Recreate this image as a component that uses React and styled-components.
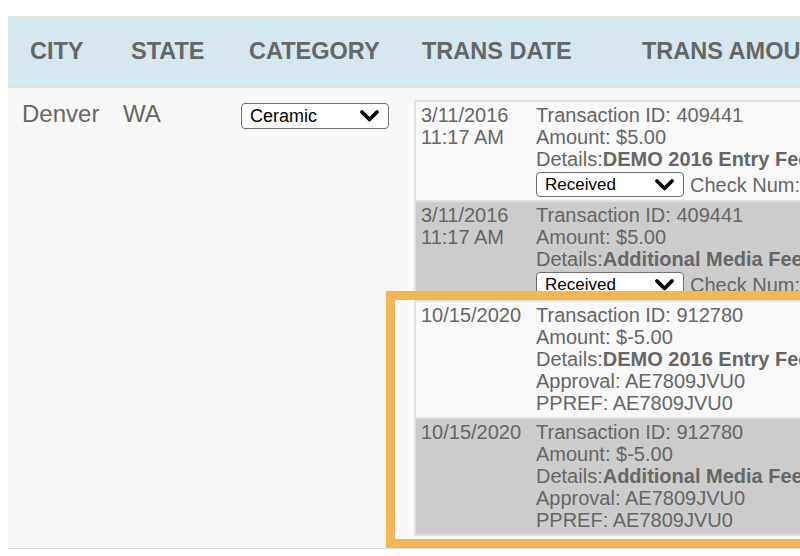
import styled, { createGlobalStyle } from "styled-components";

const Global = createGlobalStyle`
  html, body {
    margin: 0;
    background: #ffffff;
    overflow: hidden;
  }
  body {
    padding: 8px;
    font-family: "Liberation Sans", Arial, sans-serif;
  }
`;

const transactions = [
  {
    date: "3/11/2016",
    time: "11:17 AM",
    id: "409441",
    amount: "$5.00",
    details: "DEMO 2016 Entry Fee",
    status: "Received",
  },
  {
    date: "3/11/2016",
    time: "11:17 AM",
    id: "409441",
    amount: "$5.00",
    details: "Additional Media Fee",
    status: "Received",
  },
  {
    date: "10/15/2020",
    id: "912780",
    amount: "$-5.00",
    details: "DEMO 2016 Entry Fee",
    approval: "AE7809JVU0",
  },
  {
    date: "10/15/2020",
    id: "912780",
    amount: "$-5.00",
    details: "Additional Media Fee",
    approval: "AE7809JVU0",
  },
];

function Chevron() {
  return (
    <svg width="21" height="14" viewBox="0 0 21 14">
      <polyline
        points="3,3 10.5,10.5 18,3"
        fill="none"
        stroke="#000"
        strokeWidth="3.8"
        strokeLinecap="round"
        strokeLinejoin="round"
      />
    </svg>
  );
}

function Dropdown({ value, width, size }) {
  return (
    <SelectBox width={width} size={size}>
      <span>{value}</span>
      <Chevron />
    </SelectBox>
  );
}

export default function App() {
  return (
    <Page>
      <Global />
      <Table>
        <Head>
          <HeadCell>CITY</HeadCell>
          <HeadCell>STATE</HeadCell>
          <HeadCell>CATEGORY</HeadCell>
          <HeadCell>TRANS DATE</HeadCell>
          <HeadCell>TRANS AMOUNT</HeadCell>
        </Head>
        <BodyRow>
          <Cell>Denver</Cell>
          <Cell>WA</Cell>
          <Cell>
            <Dropdown value="Ceramic" width={148} size={18} />
          </Cell>
          <WideCell>
            <Ledger>
              {transactions.map((t, i) => (
                <LedgerRow key={i} shaded={i % 2 === 1}>
                  <DateCol>
                    <div>{t.date}</div>
                    {t.time && <div>{t.time}</div>}
                  </DateCol>
                  <Info>
                    <div>Transaction ID: {t.id}</div>
                    <div>Amount: {t.amount}</div>
                    <div>
                      Details:<b>{t.details}</b>
                    </div>
                    {t.status && (
                      <StatusLine>
                        <Dropdown value={t.status} width={148} size={17} />
                        <span>Check Num:</span>
                      </StatusLine>
                    )}
                    {t.approval && <div>Approval: {t.approval}</div>}
                    {t.approval && <div>PPREF: {t.approval}</div>}
                  </Info>
                </LedgerRow>
              ))}
            </Ledger>
          </WideCell>
        </BodyRow>
      </Table>
      <Highlight />
    </Page>
  );
}

const Page = styled.div`
  position: relative;
  width: 1200px;
  padding-top: 8px;
`;

const Table = styled.div`
  width: 1200px;
  display: grid;
  grid-template-columns: 101px 118px 173px 220px 1fr;
`;

const Head = styled.div`
  grid-column: 1 / -1;
  display: grid;
  grid-template-columns: subgrid;
  height: 69px;
  align-items: center;
  background: #d5e8ef;
  border-top: 1px solid #e4e2d8;
  border-bottom: 2px solid #e2e1d6;
`;

const HeadCell = styled.div`
  padding-left: 22px;
  font-size: 23.5px;
  font-weight: bold;
  color: #666666;
  white-space: nowrap;
`;

const BodyRow = styled.div`
  grid-column: 1 / -1;
  display: grid;
  grid-template-columns: subgrid;
  background: #f8f8f8;
  border-bottom: 1px solid #dddddd;
`;

const Cell = styled.div`
  padding: 12px 0 12px 14px;
  font-size: 24px;
  line-height: 27px;
  color: #666666;
`;

const WideCell = styled(Cell)`
  grid-column: 4 / -1;
`;

const Ledger = styled.div`
  border: 2px solid #e2e2dc;
  border-right: none;
  width: 900px;
`;

const LedgerRow = styled.div`
  display: grid;
  grid-template-columns: 120px 1fr;
  padding: 2px 0 3px;
  background: ${(p) => (p.shaded ? "#cccccc" : "#f9f9f9")};
  border-bottom: 2px solid #e2e2dc;
  font-size: 20px;
  line-height: 22px;
  color: #666666;
  white-space: nowrap;
  &:last-child {
    border-bottom: none;
  }
`;

const DateCol = styled.div`
  padding-left: 5px;
`;

const Info = styled.div`
  b {
    font-weight: bold;
  }
`;

const StatusLine = styled.div`
  display: flex;
  align-items: center;
  gap: 6px;
  margin-top: 2px;
`;

const SelectBox = styled.div`
  box-sizing: border-box;
  width: ${(p) => p.width}px;
  height: 26px;
  margin-top: 3px;
  display: flex;
  align-items: center;
  justify-content: space-between;
  padding: 0 8px 0 8px;
  background: #ffffff;
  border: 1px solid #6f6f6f;
  border-radius: 4px;
  font-size: ${(p) => p.size}px;
  color: #000000;
  line-height: 1;
  ${StatusLine} & {
    height: 25px;
    margin-top: 0;
  }
`;

const Highlight = styled.div`
  position: absolute;
  left: 378px;
  top: 283px;
  width: 500px;
  height: 239px;
  border: 9px solid #f5b553;
  pointer-events: none;
`;
